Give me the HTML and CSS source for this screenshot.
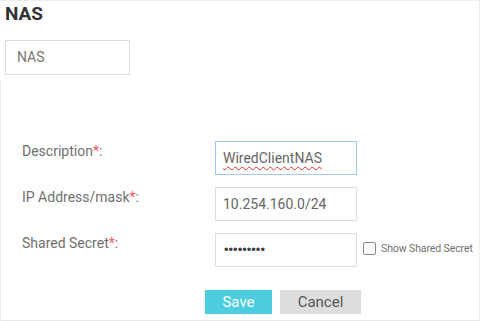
FILE: index.html
```html
<!DOCTYPE html>
<html lang="en">
<head>
    <meta charset="UTF-8">
    <title>NAS</title>
    <link rel="stylesheet" href="styles.css">
</head>
<body>
    <div class="page">
        <h1 class="title">NAS</h1>
        <div class="name-box">NAS</div>

        <!-- NAS settings form -->
        <div class="panel">
            <div class="form">
                <div class="row">
                    <label class="label">Description<span class="req">*</span>:</label>
                    <div class="field focused"><span class="misspelled">WiredClientNAS</span></div>
                </div>
                <div class="row">
                    <label class="label">IP Address/mask<span class="req">*</span>:</label>
                    <div class="field">10.254.160.0/24</div>
                </div>
                <div class="row">
                    <label class="label">Shared Secret<span class="req">*</span>:</label>
                    <div class="field secret">&bull;&bull;&bull;&bull;&bull;&bull;&bull;&bull;&bull;</div>
                    <label class="show">
                        <span class="checkbox"></span>
                        Show Shared Secret
                    </label>
                </div>
            </div>

            <div class="buttons">
                <button class="btn save">Save</button>
                <button class="btn cancel">Cancel</button>
            </div>
        </div>
    </div>
</body>
</html>
```

FILE: styles.css
```css
body {
    margin: 0;
    font-family: Roboto, "Liberation Sans", sans-serif;
    background-color: #ffffff;
}

.page {
    height: 321px;
    box-sizing: border-box;
    border-top: 1px solid #eeeeee;
    border-right: 1px solid #eeeeee;
    border-bottom: 1px solid #e8e8e8;
}

.title {
    margin: 0;
    padding: 1px 0 0 5px;
    font-size: 19px;
    font-weight: bold;
    color: #333333;
    line-height: 24px;
}

.name-box {
    margin: 14px 0 0 5px;
    width: 125px;
    height: 35px;
    box-sizing: border-box;
    border: 1px solid #dddddd;
    padding-left: 11px;
    font-size: 14px;
    line-height: 33px;
    color: #777777;
}

.panel {
    margin-top: 6px;
    height: 245px;
    border-left: 1px solid #eeeeee;
    padding-top: 60px;
    box-sizing: border-box;
}

.form {
    display: flex;
    flex-direction: column;
    gap: 12px;
}

.row {
    display: flex;
    align-items: flex-start;
}

.label {
    width: 214px;
    padding-left: 21px;
    box-sizing: border-box;
    padding-top: 1px;
    font-size: 14px;
    color: #707070;
    line-height: 18px;
}

.req {
    color: #ff5a5a;
}

.field {
    width: 142px;
    height: 34px;
    box-sizing: border-box;
    border: 1px solid #dddddd;
    padding-left: 7px;
    font-size: 14px;
    line-height: 32px;
    color: #666666;
}

.field.focused {
    border-color: #9fc6ee;
}

.misspelled {
    text-decoration: underline wavy #e03030;
    text-decoration-thickness: 1px;
    text-underline-offset: 3px;
}

.field.secret {
    font-family: "Liberation Sans", sans-serif;
    font-size: 13px;
    padding-left: 8px;
    color: #444444;
}

.show {
    display: flex;
    align-items: center;
    gap: 5px;
    margin: 9px 0 0 6px;
    font-size: 10.5px;
    letter-spacing: -0.1px;
    color: #707070;
    white-space: nowrap;
}

.checkbox {
    width: 11px;
    height: 11px;
    border: 1px solid #888888;
    border-radius: 2px;
    background-color: #ffffff;
}

.buttons {
    display: flex;
    gap: 8px;
    margin: 23px 0 0 204px;
}

.btn {
    height: 24px;
    border: none;
    padding: 0;
    font-family: Roboto, "Liberation Sans", sans-serif;
    font-size: 15px;
    cursor: pointer;
}

.save {
    width: 67px;
    background-color: #4dcde0;
    color: #ffffff;
}

.cancel {
    width: 81px;
    background-color: #dddddd;
    color: #555555;
}
```
